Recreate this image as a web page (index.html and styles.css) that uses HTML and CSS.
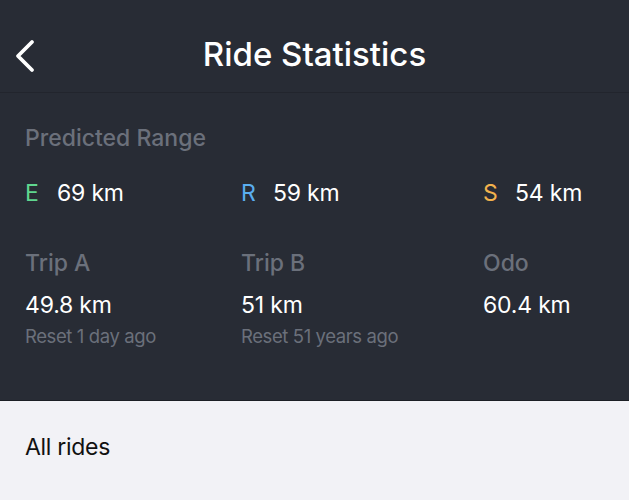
FILE: index.html
```html
<!DOCTYPE html>
<html>
<head>
<meta charset="utf-8">
<link rel="stylesheet" href="styles.css">
</head>
<body>
<div class="dark">
  <header class="topbar">
    <svg class="back" width="40" height="93" viewBox="0 0 40 93"><path d="M32 42 L18 56 L32 70" fill="none" stroke="#fff" stroke-width="3.8" stroke-linecap="round" stroke-linejoin="round"/></svg>
    <h1 class="title">Ride Statistics</h1>
  </header>
  <section class="stats">
    <div class="section-label">Predicted Range</div>
    <div class="grid range">
      <div class="mode"><span class="letter e">E</span><span class="val">69 km</span></div>
      <div class="mode"><span class="letter r">R</span><span class="val">59 km</span></div>
      <div class="mode"><span class="letter s">S</span><span class="val">54 km</span></div>
    </div>
    <div class="grid trips">
      <div class="trip"><div class="section-label">Trip A</div><div class="val">49.8 km</div><div class="sub">Reset 1 day ago</div></div>
      <div class="trip"><div class="section-label">Trip B</div><div class="val">51 km</div><div class="sub">Reset 51 years ago</div></div>
      <div class="trip"><div class="section-label">Odo</div><div class="val">60.4 km</div></div>
    </div>
  </section>
</div>
<div class="light">
  <div class="all">All rides</div>
</div>
</body>
</html>
```
FILE: styles.css
```css
* { box-sizing: border-box; margin: 0; padding: 0; }
html, body { width: 629px; height: 500px; overflow: hidden; }
body { font-family: Inter, "Noto Sans", sans-serif; background: #f2f2f6; }
.dark { background: #282c35; height: 401px; border-bottom: 1px solid #1c1f25; }
.topbar { height: 93px; position: relative; display: flex; align-items: center; justify-content: center; border-bottom: 1px solid #22252d; }
.back { position: absolute; left: 0; top: 0; }
.title { color: #fff; font-weight: 500; font-size: 33px; letter-spacing: 0; line-height: 40px; margin-top: 15px; }
.stats { padding: 31px 25px 0 25px; }
.section-label { color: #6b707b; font-size: 23px; font-weight: 500; letter-spacing: 0; line-height: 28px; }
.grid { display: grid; grid-template-columns: 216px 242px 1fr; }
.range { margin-top: 27px; }
.mode { display: flex; align-items: center; line-height: 28px; }
.letter { font-size: 23px; font-weight: 400; width: 32px; }
.letter.e { color: #5fd68f; }
.letter.r { color: #5aaef0; }
.letter.s { color: #f2b24d; }
.val { color: #fff; font-size: 23px; font-weight: 400; letter-spacing: -0.2px; line-height: 28px; }
.trips { margin-top: 42px; }
.trip .val { margin-top: 14px; }
.sub { color: #6b707b; font-size: 18.5px; letter-spacing: -0.4px; margin-top: 5px; line-height: 24px; }
.light { padding: 32px 25px; }
.all { color: #111; font-size: 23px; font-weight: 400; letter-spacing: -0.3px; line-height: 28px; }
```
